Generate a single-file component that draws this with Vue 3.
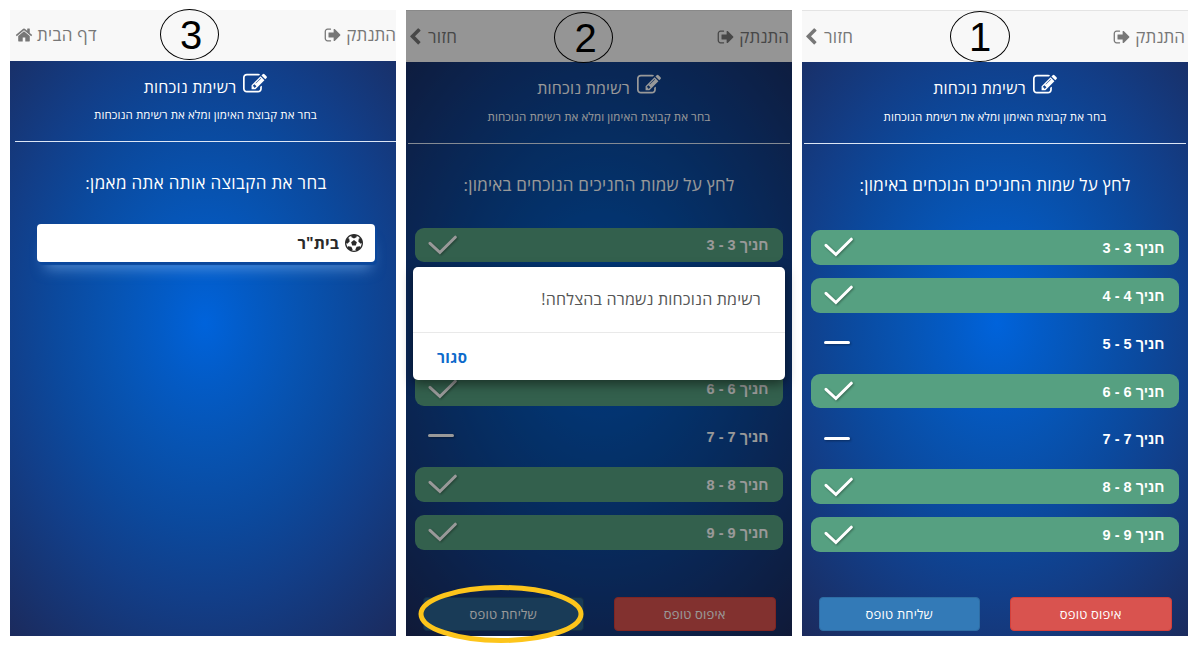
<script setup>
const icons = {
  home: 'M1472 992v480q0 26-19 45t-45 19h-384v-384h-256v384h-384q-26 0-45-19t-19-45v-480q0-1 .5-3t.5-3l575-474 575 474q1 2 1 6zm223-69l-62 74q-8 9-21 11h-3q-13 0-21-7l-692-577-692 577q-12 8-24 7-13-2-21-11l-62-74q-8-10-7-23.5t11-21.5l719-599q32-26 76-26t76 26l244 204v-195q0-14 9-23t23-9h192q14 0 23 9t9 23v408l219 182q10 8 11 21.5t-7 23.5z',
  back: 'M1427 301l-531 531 531 531q19 19 19 45t-19 45l-166 166q-19 19-45 19t-45-19l-742-742q-19-19-19-45t19-45l742-742q19-19 45-19t45 19l166 166q19 19 19 45t-19 45z',
  out: 'M704 1440q0 4 1 20t.5 26.5-3 23.5-10 19.5-20.5 6.5h-320q-119 0-203.5-84.5t-84.5-203.5v-704q0-119 84.5-203.5t203.5-84.5h320q13 0 22.5 9.5t9.5 22.5q0 4 1 20t.5 26.5-3 23.5-10 19.5-20.5 6.5h-320q-66 0-113 47t-47 113v704q0 66 47 113t113 47h312l11.5 1 11.5 3 8 5.5 7 9 2 13.5zm928-544q0 26-19 45l-544 544q-19 19-45 19t-45-19-19-45v-288h-448q-26 0-45-19t-19-45v-384q0-26 19-45t45-19h448v-288q0-26 19-45t45-19 45 19l544 544q19 19 19 45z',
  edit: 'M888 1184l116-116-152-152-116 116v56h96v96h56zm440-720q-16-16-33 1l-350 350q-17 17-1 33t33-1l350-350q17-17 1-33zm80 594v190q0 119-84.5 203.5t-203.5 84.5h-832q-119 0-203.5-84.5t-84.5-203.5v-832q0-119 84.5-203.5t203.5-84.5h832q63 0 117 25 15 7 18 23 3 17-9 29l-49 49q-14 14-32 8-23-6-45-6h-832q-66 0-113 47t-47 113v832q0 66 47 113t113 47h832q66 0 113-47t47-113v-126q0-13 9-22l64-64q15-15 35-7t20 29zm-96-738l288 288-672 672h-288v-288zm444 132l-92 92-288-288 92-92q28-28 68-28t68 28l152 152q28 28 28 68t-28 68z',
  ball: 'M609 816l287-208 287 208-109 336h-355zm287-816q182 0 348 71t286 191 191 286 71 348-71 348-191 286-286 191-348 71-348-71-286-191-191-286-71-348 71-348 191-286 286-191 348-71zm619 1350q149-203 149-454v-3l-102 89-240-224 63-323 134 12q-150-206-389-282l53 124-287 159-287-159 53-124q-239 76-389 282l135-12 62 323-240 224-102-89v3q0 251 149 454l30-132 326 40 139 298-116 69q117 39 240 39t240-39l-116-69 139-298 326-40z',
}
const students = [
  { n: 3, on: true }, { n: 4, on: true }, { n: 5, on: false }, { n: 6, on: true },
  { n: 7, on: false }, { n: 8, on: true }, { n: 9, on: true },
]
const screens = [
  { step: 3, nav: 'דף הבית', icon: 'home', heading: 'בחר את הקבוצה אותה אתה מאמן:', covered: [] },
  { step: 2, nav: 'חזור', icon: 'back', heading: 'לחץ על שמות החניכים הנוכחים באימון:', covered: [4, 5] },
  { step: 1, nav: 'חזור', icon: 'back', heading: 'לחץ על שמות החניכים הנוכחים באימון:', covered: [] },
]
</script>

<template>
  <main class="board">
    <section v-for="s in screens" :key="s.step" class="phone" :class="'step' + s.step">
      <header class="bar">
        <span class="nav-item out">
          <span>התנתק</span>
          <svg class="i-out" viewBox="0 0 1792 1792"><path :d="icons.out" /></svg>
        </span>
        <span class="nav-item back">
          <span>{{ s.nav }}</span>
          <svg :class="'i-' + s.icon" viewBox="0 0 1792 1792"><path :d="icons[s.icon]" /></svg>
        </span>
      </header>
      <div class="intro">
        <h1 class="title">
          <svg class="i-edit" viewBox="0 0 1792 1792"><path :d="icons.edit" /></svg>
          <span>רשימת נוכחות</span>
        </h1>
        <p class="sub">בחר את קבוצת האימון ומלא את רשימת הנוכחות</p>
      </div>
      <h2 class="heading">{{ s.heading }}</h2>

      <div v-if="s.step === 3" class="team">
        <svg class="i-ball" viewBox="0 0 1792 1792"><path :d="icons.ball" /></svg>
        <span>בית"ר</span>
      </div>
      <template v-else>
        <ul class="list">
          <li v-for="k in students" :key="k.n" class="row" :class="{ on: k.on }">
            <template v-if="!s.covered.includes(k.n)">
              <span class="name">חניך {{ k.n }} - {{ k.n }}</span>
              <svg class="mark" viewBox="0 0 30 20">
                <path :d="k.on ? 'M2 8.3L11.9 17.5L27.3 2.2' : 'M1.5 9.4H24.5'" />
              </svg>
            </template>
          </li>
        </ul>
        <div class="actions">
          <button class="btn reset">איפוס טופס</button>
          <button class="btn send">שליחת טופס</button>
        </div>
      </template>

      <template v-if="s.step === 2">
        <div class="shade"></div>
        <div class="dialog">
          <p class="message">רשימת הנוכחות נשמרה בהצלחה!</p>
          <div class="foot"><span class="close">סגור</span></div>
        </div>
        <svg class="ring" viewBox="0 0 168 60"><ellipse cx="84" cy="30" rx="80" ry="26.5" /></svg>
      </template>
      <div class="badge"><span>{{ s.step }}</span></div>
    </section>
  </main>
</template>

<style>
body { margin: 0; background: #fff; }
</style>

<style scoped>
.board {
  display: flex;
  gap: 10px;
  width: 1200px;
  height: 648px;
  padding: 10px;
  box-sizing: border-box;
  font-family: "Open Sans", "Liberation Sans", sans-serif;
}
.phone {
  position: relative;
  display: flex;
  flex-direction: column;
  width: 386px;
  height: 626px;
  direction: rtl;
  color: #fff;
  background: radial-gradient(ellipse 300px 405px at 50.5% 50%, #0063db 0%, #035bc6 15%, #0753b1 32%, #0b499d 50%, #123e88 68%, #1b2b5e 100%);
}
.bar {
  display: flex;
  justify-content: space-between;
  align-items: center;
  height: 52px;
  padding: 0 3px 0 1px;
  box-sizing: border-box;
  background: #f8f8f8;
  border-top: 1px solid #e4e4e4;
  color: #777;
}
.step3 .bar { height: 50.5px; padding: 0 0 0 5px; border-top: 0; }
.nav-item { display: flex; align-items: center; gap: 5px; font-size: 17px; line-height: 24px; }
svg { display: block; fill: currentColor; }
.i-out, .i-home { width: 18px; height: 18px; }
.i-out { margin-left: -2px; margin-right: -1px; }
.i-back { width: 18px; height: 18px; margin-left: -1px; }
.back { gap: 4px; letter-spacing: 0.3px; }
.intro {
  height: 81.5px;
  margin: 0 2px;
  border-bottom: 1px solid #dce6f5;
  box-sizing: border-box;
  text-align: center;
}
.step3 .intro { margin: 0 0 0 5px; }
.title {
  display: flex;
  justify-content: center;
  gap: 7px;
  margin: 0;
  padding-top: 11px;
  font-size: 16px;
  font-weight: 400;
  line-height: 30px;
  letter-spacing: 0.2px;
}
.i-edit { width: 24px; height: 24px; }
.sub { margin: 4.5px 0 0; font-size: 11.5px; line-height: 17px; letter-spacing: 0.1px; }
.heading { margin: 27px 0 0; text-align: center; font-size: 17px; font-weight: 400; line-height: 28px; letter-spacing: 0.22px; }
.step3 .heading { margin-left: 6px; letter-spacing: 0.33px; }
.team {
  display: flex;
  align-items: center;
  gap: 6px;
  height: 38px;
  margin: 27px 21px 0 27px;
  padding: 0 12px;
  box-sizing: border-box;
  border-radius: 4px;
  background: #fff;
  color: #2a2a2a;
  font-size: 16px;
  font-weight: 700;
  letter-spacing: 0.1px;
  box-shadow: 2px 3px 1px #0b479c, 2px 13px 14px -6px rgba(130, 180, 240, .55);
}
.i-ball { width: 18px; height: 18px; }
.list {
  display: flex;
  flex-direction: column;
  gap: 13.1px;
  margin: 31.5px 9.5px 0 9px;
  padding: 0;
  list-style: none;
}
.step2 .list { margin-top: 29px; }
.row {
  display: flex;
  align-items: center;
  justify-content: space-between;
  height: 34.8px;
  padding: 0 14px 0 12.5px;
  box-sizing: border-box;
  border-radius: 9px;
}
.row.on { background: #56a081; }
.name { font-family: "Liberation Sans", sans-serif; font-size: 14.5px; font-weight: 700; padding-top: 1px; }
.mark { width: 30px; height: 20px; fill: none; stroke: #fff; stroke-width: 3; stroke-linecap: round; filter: drop-shadow(1px 1px 1px rgba(0, 0, 0, .35)); }
.actions { display: flex; justify-content: space-between; margin: auto 16.5px 5px; }
.btn {
  width: 161.5px;
  height: 34px;
  padding: 0;
  border: 1px solid #d43f3a;
  border-radius: 4px;
  background: #d9534f;
  color: #fff;
  font-family: inherit;
  font-size: 13px;
  letter-spacing: 0.2px;
}
.send { background: #337ab7; border-color: #2e6da4; }
.step2 .send { background: #2b6391; border-color: #204d74; }
.shade { position: absolute; inset: 0; background: rgba(0, 0, 0, .4); }
.dialog {
  position: absolute;
  left: 7px;
  top: 257px;
  width: 372px;
  height: 113px;
  border-radius: 5px;
  background: #fff;
  box-shadow: 0 4px 12px rgba(0, 0, 0, .5);
}
.message {
  height: 65px;
  margin: 0;
  padding: 0 24px;
  border-bottom: 1px solid #e9e9e9;
  color: #555;
  font-size: 16px;
  line-height: 65px;
  letter-spacing: 0.2px;
}
.foot { display: flex; justify-content: flex-end; padding-left: 24px; color: #0d6acb; font-size: 15px; font-weight: 700; line-height: 48px; letter-spacing: 0.4px; }
.ring { position: absolute; left: 10.5px; top: 574px; width: 168px; height: 60px; fill: none; stroke: #fdc51b; stroke-width: 5; }
.badge {
  position: absolute;
  left: 148px;
  top: 1px;
  display: flex;
  align-items: center;
  justify-content: center;
  width: 60px;
  height: 51px;
  box-sizing: border-box;
  border: 1px solid #000;
  border-radius: 50%;
  color: #000;
  font-family: "Liberation Sans", sans-serif;
  font-size: 40px;
  line-height: 1;
}
.step3 .badge { left: 150px; top: -1px; width: 59px; padding-left: 3px; }
.step2 .badge { top: 2px; width: 59px; padding-left: 4px; }
</style>
